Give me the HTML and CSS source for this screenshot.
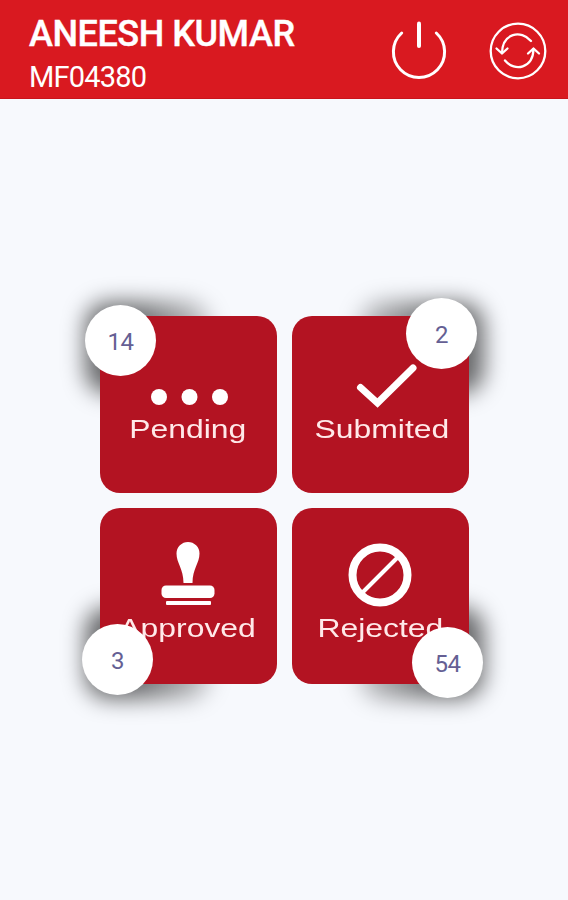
FILE: index.html
```html
<!DOCTYPE html>
<html lang="en">

<head>
    <meta charset="UTF-8">
    <meta name="viewport" content="width=device-width, initial-scale=1.0">
    <title>Dashboard</title>
    <link rel="stylesheet" href="styles.css">
</head>

<body>
    <header class="topbar">
        <div class="user">
            <h1 class="user-name">ANEESH KUMAR</h1>
            <p class="user-id">MF04380</p>
        </div>
        <div class="actions">
            <button class="icon-btn" aria-label="Log out">
                <svg width="60" height="60" viewBox="0 0 60 60">
                    <path d="M12.7 12A25.6 25.6 0 1 0 47.3 12" />
                    <path d="M30 2.500V25" stroke-width="4" />
                </svg>
            </button>
            <button class="icon-btn" aria-label="Refresh">
                <svg class="thin" width="60" height="60" viewBox="0 0 60 60">
                    <circle cx="30" cy="30" r="27.3" />
                    <path d="M43 20C33 8.500 14.500 12 14 32" />
                    <path d="M8.500 27.500L14 32.500L19.500 27.500" />
                    <path d="M17 39.500C27 51.500 45 47 45.500 28" />
                    <path d="M40 32.500L45.500 27.500L51 32.500" />
                </svg>
            </button>
        </div>
    </header>

    <main class="tiles">
        <a class="tile top left">
            <div class="tile-box">
                <svg class="icon dots" width="80" height="18" viewBox="0 0 80 18">
                    <circle cx="10" cy="9" r="8" />
                    <circle cx="40.5" cy="9" r="8" />
                    <circle cx="71" cy="9" r="8" />
                </svg>
                <span class="label">Pending</span>
            </div>
            <span class="badge">14</span>
        </a>
        <a class="tile top right">
            <div class="tile-box">
                <svg class="icon check" width="64" height="46" viewBox="0 0 64 46">
                    <path d="M5.500 24.500L22.500 40L58 5" />
                </svg>
                <span class="label">Submited</span>
            </div>
            <span class="badge">2</span>
        </a>
        <a class="tile bottom left">
            <div class="tile-box">
                <svg class="icon" width="54" height="64" viewBox="0 0 54 64">
                    <path d="M22.500 42C22.500 28 15.500 22 15.500 12.500A11.500 11.500 0 0 1 38.500 12.500C38.500 22 31.500 28 31.500 42Z" />
                    <rect x="0.500" y="44.500" width="53" height="12.500" rx="4.500" />
                    <rect x="5" y="60" width="45" height="4" rx="1" />
                </svg>
                <span class="label">Approved</span>
            </div>
            <span class="badge">3</span>
        </a>
        <a class="tile bottom right">
            <div class="tile-box">
                <svg class="icon ban" width="64" height="64" viewBox="0 0 64 64">
                    <circle cx="32" cy="32" r="27.5" />
                    <path d="M14 50L50 14" />
                </svg>
                <span class="label">Rejected</span>
            </div>
            <span class="badge">54</span>
        </a>
    </main>
</body>

</html>
```
FILE: styles.css
```css
* {
    box-sizing: border-box;
}

body {
    margin: 0;
    min-height: 900px;
    font-family: Roboto, sans-serif;
    background-color: #f7f9fd;
}

.topbar {
    display: flex;
    justify-content: space-between;
    height: 99px;
    padding: 13px 20px 0 29px;
    background-color: #d91920;
    color: #fff;
    border-bottom: 1px solid #c9141c;
}

.user-name {
    margin: 0;
    font-size: 36px;
    font-weight: 500;
    line-height: 42px;
    letter-spacing: -0.45px;
    white-space: nowrap;
    -webkit-text-stroke: 0.4px #fff;
}

.user-id {
    margin: 4px 0 0;
    font-size: 29px;
    line-height: 37px;
    letter-spacing: -0.8px;
}

.actions {
    display: flex;
    gap: 39px;
    padding-top: 8px;
}

.icon-btn {
    width: 60px;
    height: 60px;
    padding: 0;
    border: none;
    background: none;
    cursor: pointer;
}

.icon-btn svg {
    display: block;
    fill: none;
    stroke: #fff;
    stroke-width: 3;
    stroke-linecap: round;
    stroke-linejoin: round;
}

.icon-btn .thin {
    stroke-width: 2.3;
}

.tiles {
    display: grid;
    grid-template-columns: 177px 177px;
    grid-auto-rows: 176.5px;
    gap: 15px;
    width: 369px;
    margin: 217px 0 0 100px;
}

.tile {
    position: relative;
    cursor: pointer;
}

/* soft shadow on the outer corner of each tile */
.tile::before {
    content: "";
    position: absolute;
    z-index: -1;
    width: 126px;
    height: 92px;
    border-radius: 24px;
    filter: blur(11px);
}

.top::before {
    top: -14px;
}

.bottom::before {
    bottom: -15px;
}

.left::before {
    left: -15px;
    background: linear-gradient(to right, rgba(0, 0, 0, 0.58) 40%, rgba(0, 0, 0, 0.18));
}

.right::before {
    right: -15px;
    background: linear-gradient(to left, rgba(0, 0, 0, 0.58) 40%, rgba(0, 0, 0, 0.18));
}

.tile-box {
    display: flex;
    flex-direction: column;
    align-items: center;
    justify-content: flex-end;
    height: 100%;
    border-radius: 20px;
    background-color: #b31322;
    color: #ffe9e9;
}

.top .tile-box {
    padding-bottom: 49px;
}

.bottom .tile-box {
    padding-bottom: 41px;
}

.left .tile-box {
    padding-right: 2px;
}

.icon {
    display: block;
    fill: #fff;
}

.dots {
    margin-left: 2px;
    margin-bottom: 8px;
}

.check {
    margin-left: 13px;
    margin-bottom: 5px;
    fill: none;
    stroke: #fff;
    stroke-width: 7;
    stroke-linecap: round;
}

.ban {
    margin-right: 2px;
    fill: none;
    stroke: #fff;
    stroke-width: 8;
}

.ban path {
    stroke-width: 4;
}

.bottom .icon {
    margin-bottom: 6px;
}

.bottom.left .icon {
    margin-bottom: 8px;
}

.label {
    font-family: "Liberation Sans", Arial, sans-serif;
    font-size: 25.5px;
    line-height: 30px;
    transform: scaleX(1.25);
}

.right .label {
    margin-left: 2px;
}

.bottom.right .label {
    margin-left: 0;
}

.badge {
    position: absolute;
    display: flex;
    align-items: center;
    justify-content: center;
    width: 71px;
    height: 71px;
    padding-top: 2px;
    border-radius: 50%;
    background-color: #fff;
    color: #655f94;
    font-size: 24px;
    letter-spacing: -0.6px;
}

.top.left .badge {
    top: -11px;
    left: -15px;
}

.top.right .badge {
    top: -18px;
    right: -8px;
}

.bottom.left .badge {
    bottom: -11px;
    left: -18px;
}

.bottom.right .badge {
    bottom: -14px;
    right: -14px;
}
```
